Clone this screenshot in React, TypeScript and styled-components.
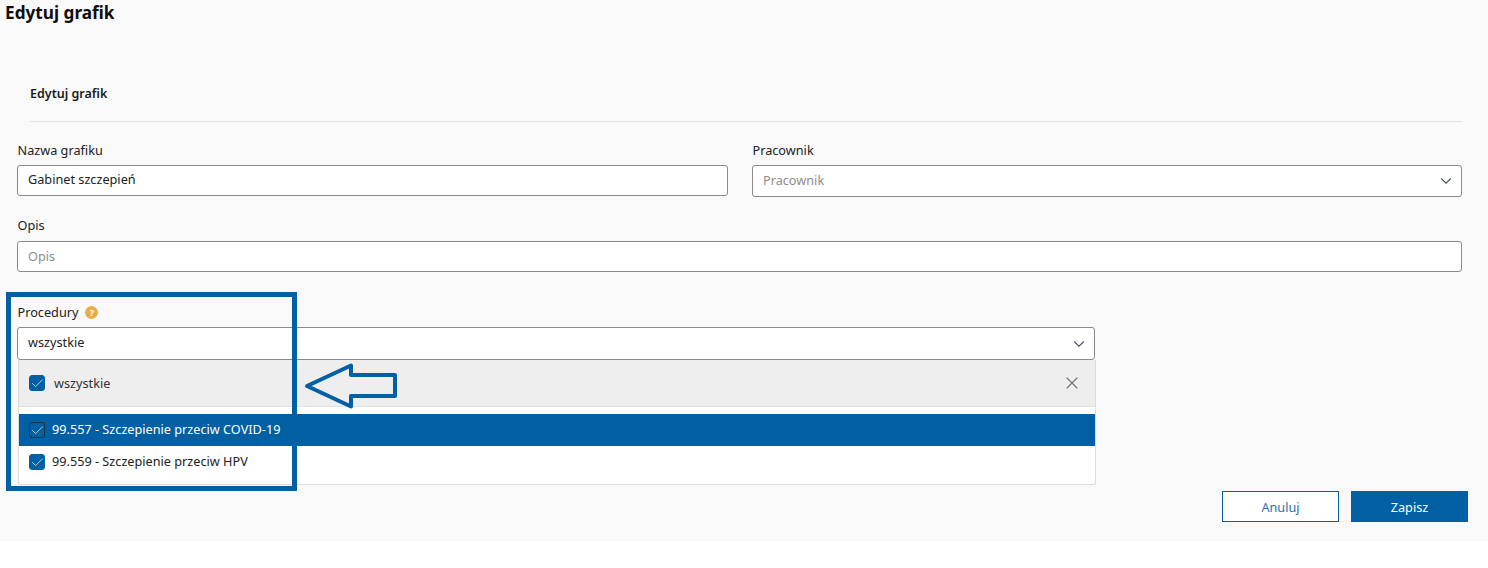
import React from 'react'
import styled, { createGlobalStyle } from 'styled-components'
import { ChevronDown, X, Check } from 'lucide-react'

const BLUE = '#0060a3'

const GlobalStyle = createGlobalStyle`
  html, body {
    margin: 0;
    padding: 0;
    background: #fff;
  }
  body {
    font-family: "Noto Sans", "Open Sans", sans-serif;
    font-size: 13px;
    color: #1c1c1c;
  }
  * {
    box-sizing: border-box;
  }
`

const Page = styled.div`
  position: relative;
  height: 541px;
  width: 1488px;
  background: #f9f9f9;
  padding-right: 20px;
`

const PageTitle = styled.h1`
  margin: 0;
  padding-left: 5px;
  height: 25px;
  line-height: 25px;
  font-size: 17.2px;
  font-weight: 700;
  color: #0e0e0e;
`

const Form = styled.div`
  width: 1445px;
  margin-left: 17px;
`

const SectionHead = styled.div`
  margin: 56px 0 0 13px;
  height: 41px;
  padding-top: 4px;
  line-height: 18px;
  font-size: 12.5px;
  font-weight: 600;
  color: #1a1a1a;
  border-bottom: 1px solid #e3e3e3;
`

const Columns = styled.div`
  display: grid;
  grid-template-columns: 711px 710px;
  column-gap: 24px;
  margin-top: 19px;
`

const Field = styled.div<{ $top?: number; $width?: number }>`
  margin-top: ${(props) => props.$top || 0}px;
  width: ${(props) => (props.$width ? props.$width + 'px' : 'auto')};
`

const Label = styled.div<{ $gap?: number }>`
  display: flex;
  align-items: center;
  gap: 7px;
  height: 19px;
  line-height: 19px;
  margin: 0 0 ${(props) => props.$gap || 5}px 0.5px;
  font-size: 12.7px;
  color: #222;
`

const HelpDot = styled.span`
  display: inline-flex;
  align-items: center;
  justify-content: center;
  width: 13px;
  height: 13px;
  border-radius: 50%;
  background: #e8ae4c;
  color: #fff;
  font-size: 9px;
  font-weight: 700;
`

const InputBox = styled.div<{ $height: number; $muted?: boolean }>`
  display: flex;
  align-items: center;
  justify-content: space-between;
  height: ${(props) => props.$height}px;
  padding: 0 6px 0 10px;
  background: #fff;
  border: 1px solid #8a8a8a;
  border-radius: 3px;
  font-size: 12.7px;
  color: ${(props) => (props.$muted ? '#8d8d8d' : '#222')};

  svg {
    color: #4f5a66;
  }
`

const InputText = styled.span<{ $lift?: number }>`
  margin-bottom: ${(props) => props.$lift || 2}px;
`

const Dropdown = styled.div`
  margin-left: 1px;
  width: 1078px;
  height: 125px;
  background: #fff;
  border: 1px solid #dcdcdc;
  border-top: none;
  border-radius: 0 0 3px 3px;
`

const DropdownHead = styled.div`
  display: flex;
  align-items: center;
  height: 47px;
  padding: 0 13px 0 10px;
  background: #eeeeee;
  border-bottom: 1px solid #dee0e3;
  font-size: 12.7px;
  color: #333;

  svg.close {
    margin-left: auto;
    color: #6c757d;
  }
`

const HeadText = styled.span`
  margin-left: 9px;
`

const Options = styled.div`
  margin-top: 7px;
`

const Option = styled.div<{ $active?: boolean }>`
  display: flex;
  align-items: center;
  gap: 7px;
  height: 32px;
  padding-left: 10px;
  background: ${(props) => (props.$active ? BLUE : '#fff')};
  color: ${(props) => (props.$active ? '#fff' : '#222')};
  font-size: 12.7px;
`

const OptionText = styled.span`
  margin-bottom: 2px;
`

const Tick = styled.span<{ $outlined?: boolean }>`
  display: inline-flex;
  align-items: center;
  justify-content: center;
  flex: none;
  width: 16px;
  height: 16px;
  border-radius: 3px;
  background: ${BLUE};
  border: 1px solid ${(props) => (props.$outlined ? '#16324a' : BLUE)};
  color: #d5e4f0;

  svg {
    flex: none;
  }
`

const Footer = styled.div`
  display: flex;
  justify-content: flex-end;
  gap: 12px;
  margin-top: 6px;
`

const Button = styled.button<{ $primary?: boolean }>`
  width: 117px;
  height: 31px;
  padding: 0;
  border: 1px solid ${BLUE};
  border-radius: 0;
  background: ${(props) => (props.$primary ? BLUE : '#fff')};
  color: ${(props) => (props.$primary ? '#fff' : '#2f6fa6')};
  font-family: inherit;
  font-size: 12.7px;
`

const Highlight = styled.div`
  position: absolute;
  left: 6px;
  top: 292px;
  width: 291px;
  height: 199px;
  border: 5px solid ${BLUE};
  pointer-events: none;
`

const ArrowMark = styled.svg`
  position: absolute;
  left: 300px;
  top: 358px;
`

const App = () => {
  return (
    <Page>
      <GlobalStyle />
      <PageTitle>Edytuj grafik</PageTitle>
      <Form>
        <SectionHead>Edytuj grafik</SectionHead>
        <Columns>
          <div>
            <Label>Nazwa grafiku</Label>
            <InputBox $height={31}>
              <InputText $lift={3}>Gabinet szczepień</InputText>
            </InputBox>
          </div>
          <div>
            <Label>Pracownik</Label>
            <InputBox $height={32} $muted>
              <InputText>Pracownik</InputText>
              <ChevronDown size={18} strokeWidth={1.5} />
            </InputBox>
          </div>
        </Columns>
        <Field $top={19}>
          <Label $gap={6}>Opis</Label>
          <InputBox $height={31} $muted>
            <InputText>Opis</InputText>
          </InputBox>
        </Field>
        <Field $top={31} $width={1078}>
          <Label>
            Procedury
            <HelpDot>?</HelpDot>
          </Label>
          <InputBox $height={33}>
            <InputText $lift={4}>wszystkie</InputText>
            <ChevronDown size={18} strokeWidth={1.5} />
          </InputBox>
          <Dropdown>
            <DropdownHead>
              <Tick><Check size={15} strokeWidth={1.3} /></Tick>
              <HeadText>wszystkie</HeadText>
              <X className="close" size={20} strokeWidth={1.3} />
            </DropdownHead>
            <Options>
              <Option $active>
                <Tick $outlined><Check size={15} strokeWidth={1.3} /></Tick>
                <OptionText>99.557 - Szczepienie przeciw COVID-19</OptionText>
              </Option>
              <Option>
                <Tick><Check size={15} strokeWidth={1.3} /></Tick>
                <OptionText>99.559 - Szczepienie przeciw HPV</OptionText>
              </Option>
            </Options>
          </Dropdown>
        </Field>
      </Form>
      <Footer>
        <Button>Anuluj</Button>
        <Button $primary>Zapisz</Button>
      </Footer>
      <Highlight />
      <ArrowMark width="100" height="54" viewBox="0 0 100 54">
        <path
          d="M7 28 L51 7.5 V17 H95 V38 H51 V48.5 Z"
          fill="none"
          stroke={BLUE}
          strokeWidth="4"
          strokeLinejoin="round"
        />
      </ArrowMark>
    </Page>
  )
}

export default App
